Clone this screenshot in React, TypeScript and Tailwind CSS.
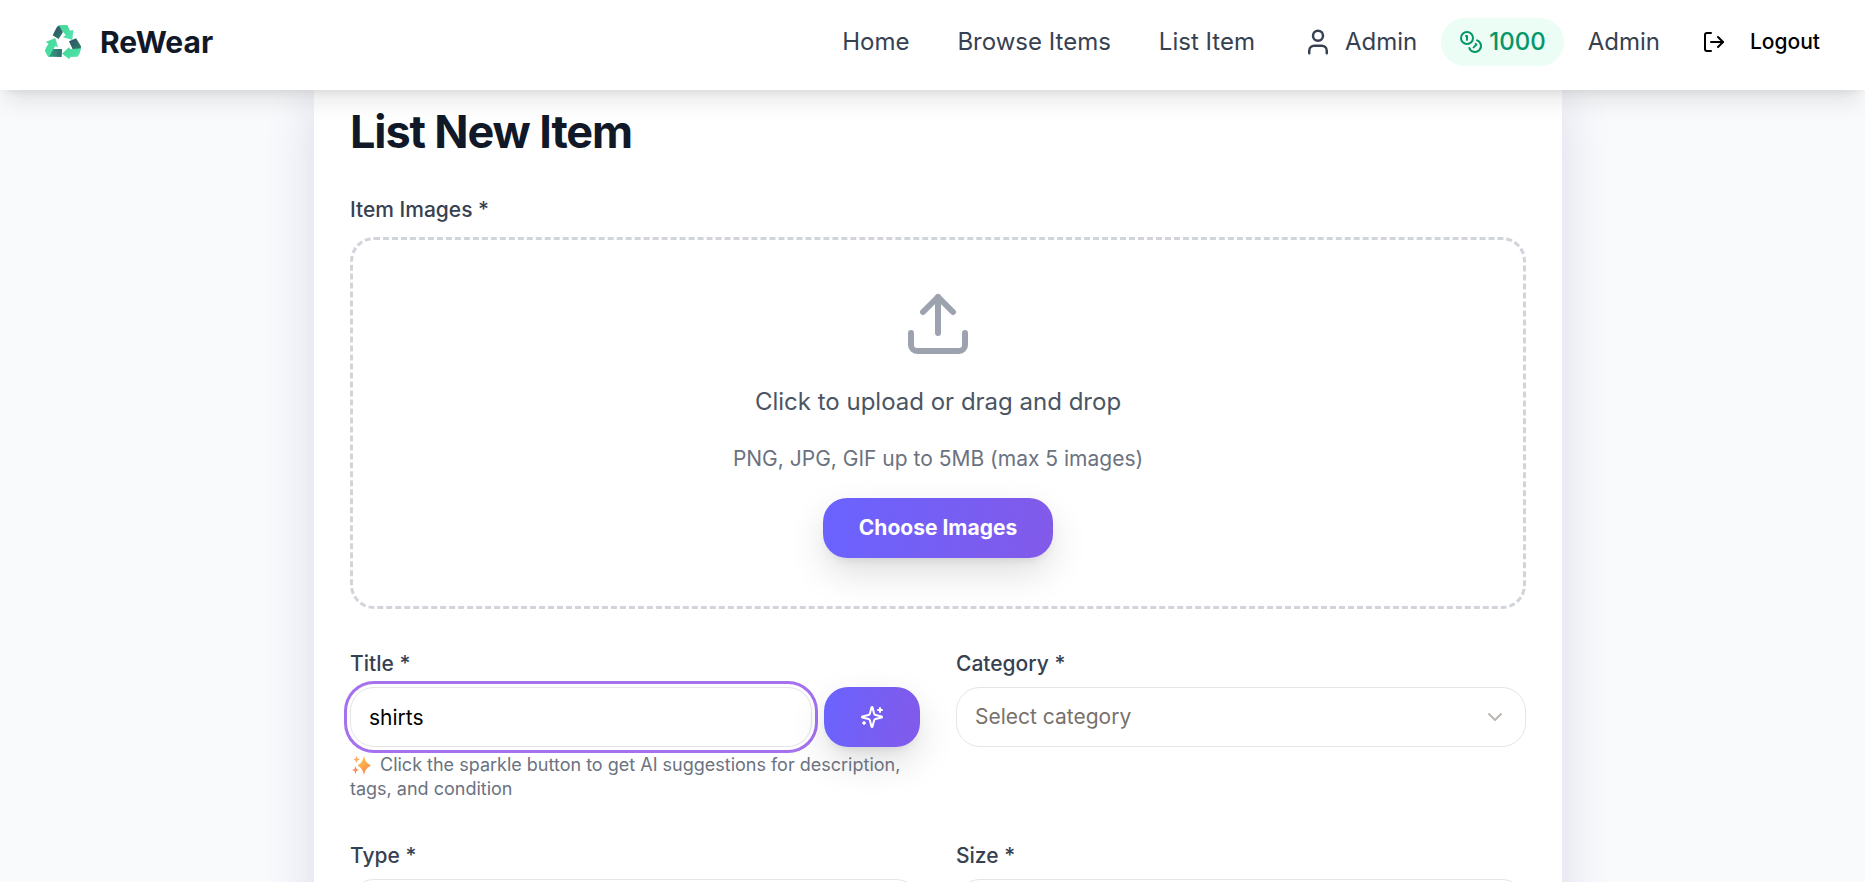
import React from "react";
import { ChevronDown, Coins, LogOut, Upload, User } from "lucide-react";

function RecycleLogo() {
  return (
    <svg viewBox="132 75 114 108" className="h-9 w-[38px]" aria-hidden="true">
      <defs>
        <linearGradient id="leaf" x1="0" y1="0" x2="1" y2="1">
          <stop offset="0" stopColor="#3fd692" />
          <stop offset="1" stopColor="#56e6b2" />
        </linearGradient>
        <linearGradient id="fold" x1="0" y1="0" x2="1" y2="1">
          <stop offset="0" stopColor="#2f4f68" />
          <stop offset="1" stopColor="#2f7d68" />
        </linearGradient>
        <linearGradient id="foldBase" x1="0" y1="0" x2="1" y2="0">
          <stop offset="0" stopColor="#34a283" />
          <stop offset="1" stopColor="#2b6a6c" />
        </linearGradient>
      </defs>
      <path d="M174 79 L202 78 L210 95 L220 93 L217 123 L188 114 L197 109 L186 94 Z" fill="url(#leaf)" />
      <path d="M177 80 L189 99 L176 120 L158 109 L171 83 Z" fill="url(#fold)" />
      <path d="M207 127 L228 118 L243 142 L242 151 L218 151 Z" fill="url(#fold)" />
      <path d="M243 148 Q241 164 233 173 L211 174 L208 181 L186 164 L207 145 L211 151 Z" fill="url(#leaf)" />
      <path d="M137 129 L166 117 L174 145 L165 142 L150 174 L144 173 L135 157 Q135 148 146 134 Z" fill="url(#leaf)" />
      <path d="M147 173 L160 150 L186 150 L185 174 Z" fill="url(#foldBase)" />
    </svg>
  );
}

function SparkleMark() {
  return (
    <svg viewBox="0 0 20 20" className="mr-2 ml-0.5 inline-block h-5 w-5 align-text-bottom" aria-hidden="true">
      <defs>
        <linearGradient id="gold" x1="0" y1="0" x2="0.6" y2="1">
          <stop offset="0" stopColor="#ffcf4a" />
          <stop offset="1" stopColor="#f78a4f" />
        </linearGradient>
      </defs>
      <path d="M12 1 C13.500 6.500 14.500 8 19 10.500 C14.500 13 13.500 14.500 12 20 C10.500 14.500 9.500 13 5.500 10.500 C9.500 8 10.500 6.500 12 1Z" fill="url(#gold)" />
      <path d="M4.500 1 L5.500 3.500 L8 4.500 L5.500 5.500 L4.500 8 L3.500 5.500 L1.500 4.500 L3.500 3.500Z" fill="#fbae5c" />
      <path d="M3.500 11 L4.500 14 L7 15 L4.500 16 L3.500 19 L2.500 16 L0 15 L2.500 14Z" fill="#f78b5a" />
    </svg>
  );
}

function Sparkles() {
  return (
    <svg
      viewBox="0 0 24 24"
      className="size-6"
      fill="none"
      stroke="currentColor"
      strokeWidth="2"
      strokeLinecap="round"
      strokeLinejoin="round"
      aria-hidden="true"
    >
      <path d="M9.937 15.5A2 2 0 0 0 8.5 14.063l-6.135-1.582a.5.5 0 0 1 0-.962L8.5 9.936A2 2 0 0 0 9.937 8.5l1.582-6.135a.5.5 0 0 1 .963 0L14.063 8.5A2 2 0 0 0 15.5 9.937l6.135 1.581a.5.5 0 0 1 0 .964L15.5 14.063a2 2 0 0 0-1.437 1.437l-1.582 6.135a.5.5 0 0 1-.963 0z" />
      <path d="M20 3v4" />
      <path d="M22 5h-4" />
      <path d="M4 17v2" />
      <path d="M5 18H3" />
    </svg>
  );
}

const gradientButton =
  "flex h-[60px] items-center justify-center rounded-3xl bg-linear-[100deg] from-[#6a63ff] to-[#825ae9] text-white shadow-[0_15px_38px_-2px_rgba(0,0,0,0.14),0_6px_12px_-6px_rgba(0,0,0,0.12)]";

const fieldLabel = "pt-0.5 text-[21px] leading-[34px] font-medium text-[#374151]";

function SelectField({ id, label, placeholder }: { id: string; label: string; placeholder: string }) {
  return (
    <div className="flex flex-col gap-1.5">
      <label htmlFor={id} className={fieldLabel}>
        {label}
      </label>
      <div className="grid items-center">
        <select
          id={id}
          defaultValue=""
          className="col-start-1 row-start-1 h-[60px] w-full appearance-none rounded-3xl border border-[#e5e5e5] bg-white px-[18px] text-[21px] text-[#78716c] outline-none"
        >
          <option value="">{placeholder}</option>
        </select>
        <ChevronDown className="pointer-events-none col-start-1 row-start-1 mr-[19px] size-6 justify-self-end text-[#b9b6b3]" />
      </div>
    </div>
  );
}

export default function App() {
  return (
    <div className="flex h-screen flex-col overflow-hidden bg-[#f9fafc] font-['Inter',sans-serif]">
      <header className="z-10 flex shrink-0 items-center justify-between bg-white pt-[18px] pr-[27px] pb-6 pl-11 shadow-[0_15px_23px_-5px_rgba(0,0,0,0.1),0_6px_9px_-6px_rgba(0,0,0,0.1)]">
        <a href="#home" className="flex items-center gap-[18px] text-[30px] leading-9 font-bold text-[#111827]">
          <RecycleLogo />
          ReWear
        </a>
        <nav className="flex items-center text-2xl leading-9 text-[#374151]">
          <div className="flex items-center gap-12">
            <a href="#home">Home</a>
            <a href="#browse">Browse Items</a>
            <a href="#list">List Item</a>
            <a href="#profile" className="flex items-center gap-3">
              <User className="size-[30px]" />
              Admin
            </a>
          </div>
          <span className="mx-6 flex h-12 items-center gap-1.5 rounded-full bg-[#ecfdf5] px-[18px] font-medium text-[#059669]">
            <Coins className="size-6" />
            1000
          </span>
          <span>Admin</span>
          <button type="button" className="ml-6 flex items-center gap-6 px-[18px] text-[21px] font-medium text-black">
            <LogOut className="size-6" />
            Logout
          </button>
        </nav>
      </header>

      <main className="flex min-h-0 flex-1 justify-center pl-[11px]">
        <form className="flex h-max w-full max-w-[1248px] flex-col gap-9 bg-white px-9 pt-3 pb-9 shadow-[0_12px_48px_rgba(31,31,115,0.14)]">
          <h1 className="pt-1.5 text-[45px] leading-[48px] font-bold tracking-tight text-[#111827]">List New Item</h1>

          <div className="flex flex-col gap-[9px]">
            <label htmlFor="choose" className="text-[21px] leading-9 font-medium text-[#374151]">
              Item Images *
            </label>
            <div className="flex flex-col items-center gap-6 rounded-3xl border-3 border-dashed border-[#d1d5db] py-12">
              <Upload className="size-[72px] text-[#9ca3af]" />
              <p className="text-2xl leading-9 text-[#4b5563]">Click to upload or drag and drop</p>
              <p className="text-[21px] leading-[30px] text-[#6b7280]">PNG, JPG, GIF up to 5MB (max 5 images)</p>
              <button id="choose" type="button" className={gradientButton + " px-9 text-[21px] font-bold"}>
                Choose Images
              </button>
            </div>
          </div>

          <div className="grid grid-cols-2 gap-9">
            <div className="flex flex-col gap-1.5">
              <label htmlFor="title" className={fieldLabel}>
                Title *
              </label>
              <div className="flex gap-3">
                <input
                  id="title"
                  type="text"
                  defaultValue="shirts"
                  className="h-[60px] min-w-0 flex-1 rounded-3xl border border-[#e5e5e5] bg-white px-[18px] text-[21px] text-black ring-3 ring-[#a571ef] ring-offset-3 outline-none"
                />
                <button type="button" aria-label="Suggest details" className={gradientButton + " w-24"}>
                  <Sparkles />
                </button>
              </div>
              <p className="text-lg leading-6 text-[#6b7280]">
                <SparkleMark />
                Click the sparkle button to get AI suggestions for description, tags, and condition
              </p>
            </div>
            <SelectField id="category" label="Category *" placeholder="Select category" />
            <SelectField id="type" label="Type *" placeholder="Select type" />
            <SelectField id="size" label="Size *" placeholder="Select size" />
          </div>
        </form>
      </main>
    </div>
  );
}
